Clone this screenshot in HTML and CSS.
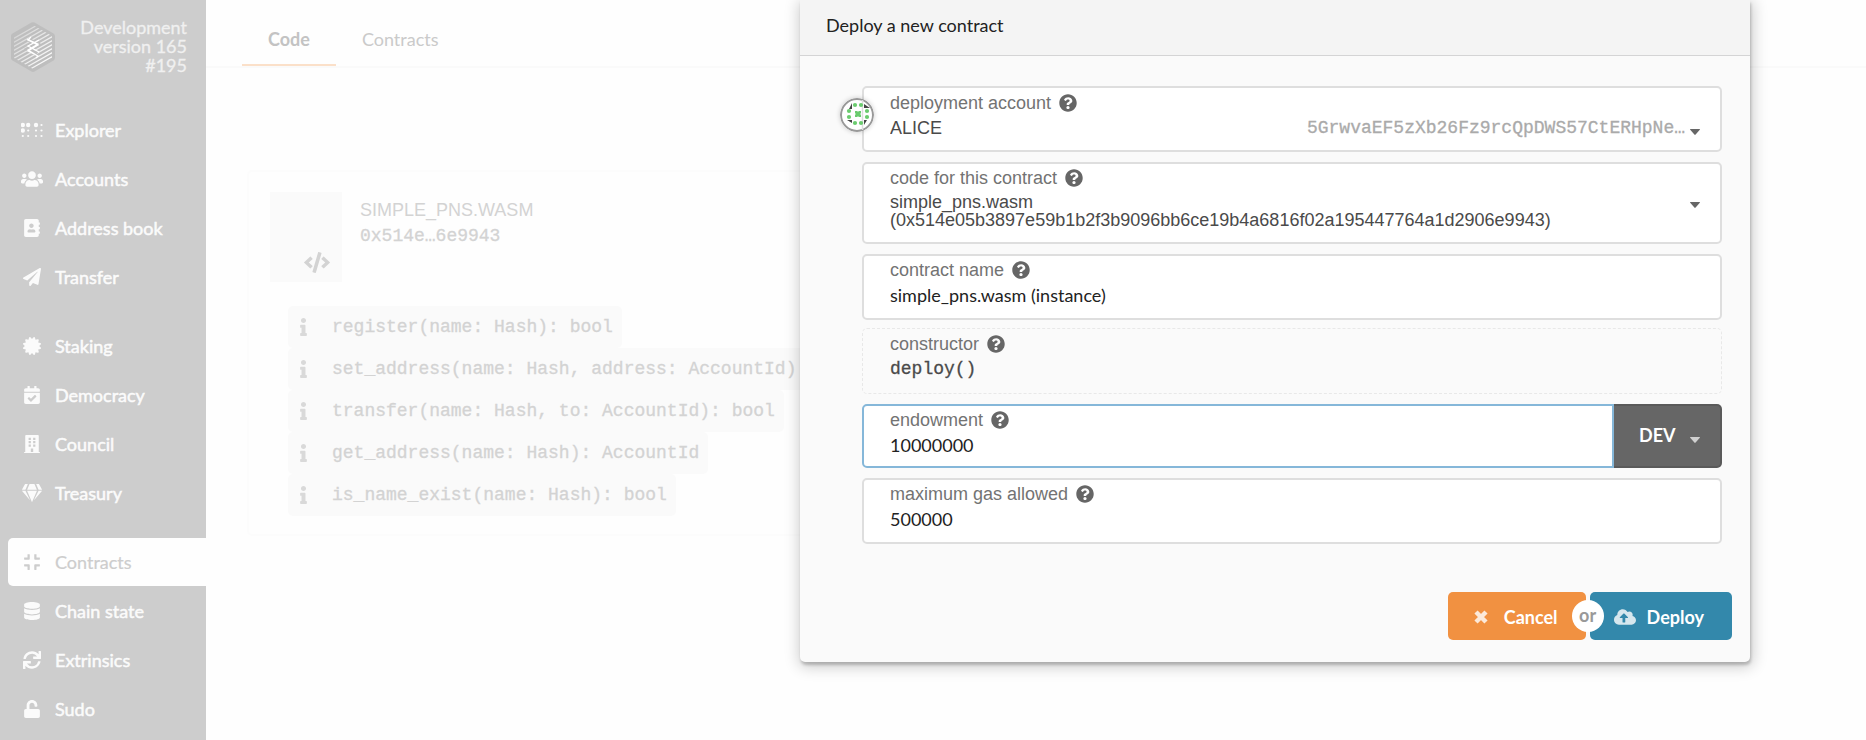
FILE: index.html
```html
<!DOCTYPE html>
<html lang="en">
<head>
<meta charset="utf-8">
<title>Deploy a new contract</title>
<link rel="stylesheet" href="styles.css">
</head>
<body>
<svg class="defs" aria-hidden="true">
  <symbol id="help" viewBox="0 0 512 512"><path d="M504 256c0 136.997-111.043 248-248 248S8 392.997 8 256C8 119.083 119.043 8 256 8s248 111.083 248 248zM262.655 90c-54.497 0-89.255 22.957-116.549 63.758-3.536 5.286-2.353 12.415 2.715 16.258l34.699 26.31c5.205 3.947 12.621 3.008 16.665-2.122 17.864-22.658 30.113-35.797 57.303-35.797 20.429 0 45.698 13.148 45.698 32.958 0 14.976-12.363 22.667-32.534 33.976C247.128 238.528 216 254.941 216 296v4c0 6.627 5.373 12 12 12h56c6.627 0 12-5.373 12-12v-1.333c0-28.462 83.186-29.647 83.186-106.667 0-58.002-60.165-102-116.531-102zM256 338c-25.365 0-46 20.635-46 46 0 25.364 20.635 46 46 46s46-20.636 46-46c0-25.365-20.635-46-46-46z"/></symbol>
  <symbol id="caret" viewBox="0 0 10 6"><path d="M.5 0h9q.8.2.3.8L5.600 5.600q-.6.6-1.200 0L.2.8Q-.3.2.5 0z"/></symbol>
  <symbol id="info" viewBox="0 0 192 512"><path d="M20 424.229h20V279.771H20c-11.046 0-20-8.954-20-20V212c0-11.046 8.954-20 20-20h112c11.046 0 20 8.954 20 20v212.229h20c11.046 0 20 8.954 20 20V492c0 11.046-8.954 20-20 20H20c-11.046 0-20-8.954-20-20v-47.771c0-11.046 8.954-20 20-20zM96 0C56.235 0 24 32.235 24 72s32.235 72 72 72 72-32.235 72-72S135.764 0 96 0z"/></symbol>
</svg>

<aside class="sidebar">
  <header class="chain">
    <svg class="chain-logo" viewBox="0 0 44 50" aria-hidden="true">
      <defs>
        <linearGradient id="fade" x1="0" y1="0" x2="0.6" y2="1">
          <stop offset="0.1" stop-color="#fff" stop-opacity="0.15"/>
          <stop offset="0.8" stop-color="#fff" stop-opacity="0.9"/>
        </linearGradient>
        <clipPath id="hex"><path d="M22 3l19 11v22L22 47 3 36V14z"/></clipPath>
      </defs>
      <path d="M20.500.6q1.500-.8 3 0l19 11q1.500 1 1.500 2.500v22q0 1.500-1.500 2.400l-19 11q-1.500.8-3 0l-19-11Q0 37.600 0 36V14q0-1.500 1.500-2.400z" fill="#bebebe"/>
      <path clip-path="url(#hex)" fill="none" stroke="url(#fade)" stroke-width="1.200" d="M0 10L44-15M0 14L44-11M0 18L44-7M0 22L44-3M0 26L44 1M0 30L44 5M0 34L44 9M0 38L44 13M0 42L44 17M0 46L44 21M0 50L44 25M0 54L44 29M0 58L44 33M0 62L44 37M0 66L44 41M0 70L44 45"/>
      <path d="M18 18l8 4-9 5 9 5" fill="none" stroke="#bebebe" stroke-width="4"/>
      <path d="M20 15l-3 3 10 5-10 6 10 5M16 17l11 5-10 6 10 6-2 2M28 18l-11 6 11 6" fill="none" stroke="#fff" stroke-width="1.200"/>
    </svg>
    <div class="chain-info">
      <div>Development</div>
      <div>version 165</div>
      <div>#195</div>
    </div>
  </header>
  <nav class="nav">
    <ul class="nav-group">
      <li><a class="nav-item" href="#explorer"><svg viewBox="0 0 22 16" aria-hidden="true"><circle cx="1.800" cy="3" r="2.200"/><circle cx="7.200" cy="3" r="2.200"/><circle cx="15" cy="3" r="2.200"/><circle cx="20.500" cy="3" r="1.100"/><circle cx="1.800" cy="8.500" r="2.200"/><circle cx="7.200" cy="8.500" r="1.100"/><circle cx="15" cy="8.500" r="1.100"/><circle cx="20.500" cy="8.500" r="1.100"/><circle cx="1.800" cy="14" r="1.100"/><circle cx="7.200" cy="14" r="1.100"/><circle cx="15" cy="14" r="1.100"/><circle cx="20.500" cy="14" r="1.100"/></svg>Explorer</a></li>
      <li><a class="nav-item" href="#accounts"><svg viewBox="0 0 640 512" aria-hidden="true"><path d="M96 224c35.300 0 64-28.700 64-64s-28.700-64-64-64-64 28.700-64 64 28.700 64 64 64zm448 0c35.300 0 64-28.700 64-64s-28.700-64-64-64-64 28.700-64 64 28.700 64 64 64zm32 32h-64c-17.600 0-33.500 7.100-45.100 18.600 40.300 22.100 68.900 62 75.100 109.400h66c17.700 0 32-14.300 32-32v-32c0-35.300-28.700-64-64-64zm-256 0c61.900 0 112-50.100 112-112S381.900 32 320 32 208 82.100 208 144s50.100 112 112 112zm76.800 32h-8.300c-20.800 10-43.900 16-68.500 16s-47.600-6-68.500-16h-8.300C179.600 288 128 339.600 128 403.200V432c0 26.500 21.500 48 48 48h288c26.500 0 48-21.500 48-48v-28.800c0-63.600-51.600-115.200-115.200-115.200zm-223.700-13.400C161.500 263.100 145.600 256 128 256H64c-35.300 0-64 28.700-64 64v32c0 17.700 14.300 32 32 32h65.900c6.300-47.400 34.900-87.300 75.200-109.400z"/></svg>Accounts</a></li>
      <li><a class="nav-item" href="#addresses"><svg viewBox="0 0 448 512" aria-hidden="true"><path d="M436 160c6.600 0 12-5.400 12-12v-40c0-6.600-5.400-12-12-12h-20V48c0-26.500-21.500-48-48-48H48C21.500 0 0 21.500 0 48v416c0 26.500 21.500 48 48 48h320c26.500 0 48-21.500 48-48v-48h20c6.600 0 12-5.400 12-12v-40c0-6.600-5.400-12-12-12h-20v-64h20c6.600 0 12-5.400 12-12v-40c0-6.600-5.400-12-12-12h-20v-64h20zm-228-32c35.300 0 64 28.700 64 64s-28.700 64-64 64-64-28.700-64-64 28.700-64 64-64zm112 236.800c0 10.600-10 19.200-22.400 19.200H118.400C106 384 96 375.400 96 364.800v-19.200c0-31.800 30.100-57.600 67.200-57.600h5c12.300 5.100 25.700 8 39.800 8s27.600-2.900 39.800-8h5c37.100 0 67.200 25.800 67.200 57.600v19.200z"/></svg>Address book</a></li>
      <li><a class="nav-item" href="#transfer"><svg viewBox="0 0 512 512" aria-hidden="true"><path d="M476 3.200L12.500 270.600c-18.100 10.400-15.800 35.600 2.200 43.200L121 358.400l287.300-253.200c5.500-4.900 13.300 2.600 8.600 8.300L176 407v80.500c0 23.600 28.500 32.900 42.500 15.800L282 426l124.600 52.200c14.200 6 30.400-2.900 33-18.200l72-432C515 7.800 493.300-6.800 476 3.200z"/></svg>Transfer</a></li>
    </ul>
    <ul class="nav-group">
      <li><a class="nav-item" href="#staking"><svg viewBox="0 0 512 512" aria-hidden="true"><path d="M458.622 255.920l45.985-45.005c13.708-12.977 7.316-36.039-10.664-40.339l-62.650-15.990 17.661-62.015c4.991-17.838-11.829-34.663-29.661-29.671l-61.994 17.667-15.984-62.671C337.085.197 313.765-6.276 300.990 7.228L256 53.570 211.011 7.229c-12.630-13.351-36.047-7.234-40.325 10.668l-15.984 62.671-61.995-17.667C74.870 57.907 58.056 74.738 63.046 92.572l17.661 62.015-62.650 15.990C.069 174.878-6.310 197.944 7.392 210.915l45.985 45.005-45.985 45.004c-13.708 12.977-7.316 36.039 10.664 40.339l62.650 15.990-17.661 62.015c-4.991 17.838 11.829 34.663 29.661 29.671l61.994-17.667 15.984 62.671c4.439 18.575 27.696 24.018 40.325 10.668L256 458.610l44.989 46.001c12.500 13.488 35.987 7.486 40.325-10.668l15.984-62.671 61.994 17.667c17.836 4.994 34.651-11.837 29.661-29.671l-17.661-62.015 62.650-15.990c17.987-4.302 24.366-27.367 10.664-40.339l-45.984-45.004z"/></svg>Staking</a></li>
      <li><a class="nav-item" href="#democracy"><svg viewBox="0 0 448 512" aria-hidden="true"><path d="M436 160H12c-6.627 0-12-5.373-12-12v-36c0-26.510 21.490-48 48-48h48V12c0-6.627 5.373-12 12-12h40c6.627 0 12 5.373 12 12v52h128V12c0-6.627 5.373-12 12-12h40c6.627 0 12 5.373 12 12v52h48c26.510 0 48 21.490 48 48v36c0 6.627-5.373 12-12 12zM12 192h424c6.627 0 12 5.373 12 12v260c0 26.510-21.490 48-48 48H48c-26.510 0-48-21.490-48-48V204c0-6.627 5.373-12 12-12zm333.296 95.947l-28.169-28.398c-4.667-4.705-12.265-4.736-16.970-.068L194.120 364.665l-45.980-46.352c-4.667-4.705-12.266-4.736-16.971-.068l-28.397 28.170c-4.705 4.667-4.736 12.265-.068 16.970l82.601 83.269c4.667 4.705 12.265 4.736 16.970.068l142.953-141.805c4.705-4.667 4.736-12.265.068-16.970z"/></svg>Democracy</a></li>
      <li><a class="nav-item" href="#council"><svg viewBox="0 0 448 512" aria-hidden="true"><path fill-rule="evenodd" d="M436 480h-20V24c0-13.300-10.700-24-24-24H56C42.700 0 32 10.700 32 24v456H12c-6.600 0-12 5.400-12 12v20h448v-20c0-6.600-5.400-12-12-12zM128 76h64v64h-64zM256 76h64v64h-64zM128 172h64v64h-64zM256 172h64v64h-64zM128 268h64v64h-64zM256 268h64v64h-64zM190 384h68v96h-68z"/></svg>Council</a></li>
      <li><a class="nav-item" href="#treasury"><svg viewBox="0 0 576 512" aria-hidden="true"><path d="M485.500 0L576 160H474.900L405.700 0h79.800zm-128 0l69.200 160H149.300L218.500 0h139zm-267 0h79.800l-69.200 160H0L90.500 0zM0 192h100.700l123 251.700c1.500 3.100-2.700 5.900-5 3.300L0 192zm148.200 0h279.600l-137 318.200c-1 2.400-4.500 2.400-5.500 0L148.200 192zm204.100 251.700l123-251.700H576L357.300 446.900c-2.300 2.700-6.500-.1-5-3.200z"/></svg>Treasury</a></li>
    </ul>
    <ul class="nav-group">
      <li><a class="nav-item active" href="#contracts" aria-current="page"><svg viewBox="0 0 448 512" aria-hidden="true"><path d="M436 192H312c-13.300 0-24-10.700-24-24V44c0-6.600 5.400-12 12-12h40c6.600 0 12 5.400 12 12v84h84c6.600 0 12 5.400 12 12v40c0 6.600-5.400 12-12 12zm-276-24V44c0-6.600-5.400-12-12-12h-40c-6.600 0-12 5.400-12 12v84H12c-6.600 0-12 5.400-12 12v40c0 6.600 5.400 12 12 12h124c13.300 0 24-10.700 24-24zm0 300V344c0-13.300-10.700-24-24-24H12c-6.600 0-12 5.400-12 12v40c0 6.600 5.400 12 12 12h84v84c0 6.600 5.400 12 12 12h40c6.600 0 12-5.400 12-12zm192 0v-84h84c6.600 0 12-5.400 12-12v-40c0-6.600-5.400-12-12-12H312c-13.300 0-24 10.700-24 24v124c0 6.600 5.400 12 12 12h40c6.600 0 12-5.400 12-12z"/></svg>Contracts</a></li>
      <li><a class="nav-item" href="#chainstate"><svg viewBox="0 0 448 512" aria-hidden="true"><path d="M448 73.143v45.714C448 159.143 347.667 192 224 192S0 159.143 0 118.857V73.143C0 32.857 100.333 0 224 0s224 32.857 224 73.143zM448 176v102.857C448 319.143 347.667 352 224 352S0 319.143 0 278.857V176c48.125 33.143 136.208 48.572 224 48.572S399.874 209.143 448 176zm0 160v102.857C448 479.143 347.667 512 224 512S0 479.143 0 438.857V336c48.125 33.143 136.208 48.572 224 48.572S399.874 369.143 448 336z"/></svg>Chain state</a></li>
      <li><a class="nav-item" href="#extrinsics"><svg viewBox="0 0 512 512" aria-hidden="true"><path d="M440.650 12.570l4 82.770A247.160 247.160 0 0 0 255.830 8C134.730 8 33.910 94.920 12.290 209.820A12 12 0 0 0 24.090 224h49.050a12 12 0 0 0 11.670-9.260 175.910 175.910 0 0 1 317-56.940l-101.460-4.860a12 12 0 0 0-12.570 12v47.410a12 12 0 0 0 12 12H500a12 12 0 0 0 12-12V12a12 12 0 0 0-12-12h-47.370a12 12 0 0 0-11.980 12.570zM255.830 432a175.610 175.610 0 0 1-146-77.800l101.800 4.870a12 12 0 0 0 12.570-12v-47.400a12 12 0 0 0-12-12H12a12 12 0 0 0-12 12V500a12 12 0 0 0 12 12h47.350a12 12 0 0 0 12-12.600l-4.150-82.570A247.170 247.170 0 0 0 255.830 504c121.110 0 221.930-86.920 243.550-201.820a12 12 0 0 0-11.800-14.180h-49.050a12 12 0 0 0-11.670 9.260A175.860 175.860 0 0 1 255.830 432z"/></svg>Extrinsics</a></li>
      <li><a class="nav-item" href="#sudo"><svg viewBox="0 0 448 512" aria-hidden="true"><path d="M400 256H152V152.900c0-39.600 31.700-72.500 71.300-72.900 40-.4 72.700 32.100 72.700 72v16c0 13.300 10.700 24 24 24h32c13.300 0 24-10.700 24-24v-16C376 68 307.500-.3 223.500 0 139.500.3 72 69.500 72 153.500V256H48c-26.500 0-48 21.500-48 48v160c0 26.500 21.500 48 48 48h352c26.500 0 48-21.500 48-48V304c0-26.500-21.500-48-48-48z"/></svg>Sudo</a></li>
    </ul>
  </nav>
</aside>

<main class="page">
  <nav class="tabs">
    <a class="tab current" href="#code">Code</a>
    <a class="tab" href="#instances">Contracts</a>
  </nav>
  <article class="card">
    <div class="card-head">
      <div class="thumb">
        <svg viewBox="0 0 640 512" aria-hidden="true"><path d="M278.900 511.500l-61-17.700c-6.400-1.800-10-8.500-8.200-14.900L346.200 8.700c1.800-6.400 8.500-10 14.900-8.200l61 17.700c6.400 1.800 10 8.500 8.200 14.900L293.800 503.300c-1.900 6.400-8.500 10.100-14.900 8.200zm-114-112.200l43.500-46.400c4.600-4.900 4.300-12.700-.8-17.200L117 256l90.600-79.700c5.100-4.500 5.500-12.300.8-17.200l-43.500-46.400c-4.500-4.800-12.100-5.100-17-.5L3.800 247.200c-5.100 4.700-5.100 12.800 0 17.500l144.100 135.100c4.900 4.600 12.500 4.400 17-.5zm327.200.6l144.100-135.100c5.100-4.700 5.100-12.800 0-17.500L492.100 112.100c-4.800-4.500-12.400-4.300-17 .5L431.600 159c-4.600 4.900-4.300 12.700.8 17.200L523 256l-90.600 79.700c-5.100 4.500-5.500 12.300-.8 17.200l43.500 46.400c4.500 4.900 12.100 5.100 17 .6z"/></svg>
      </div>
      <div class="card-title">
        <div class="card-name">SIMPLE_PNS.WASM</div>
        <div class="mono">0x514e…6e9943</div>
      </div>
      <button class="card-action" type="button" aria-label="Remove"></button>
    </div>
    <ul class="messages">
      <li class="mono"><svg><use href="#info"/></svg>register(name: Hash): bool</li>
      <li class="mono"><svg><use href="#info"/></svg>set_address(name: Hash, address: AccountId)</li>
      <li class="mono"><svg><use href="#info"/></svg>transfer(name: Hash, to: AccountId): bool</li>
      <li class="mono"><svg><use href="#info"/></svg>get_address(name: Hash): AccountId</li>
      <li class="mono"><svg><use href="#info"/></svg>is_name_exist(name: Hash): bool</li>
    </ul>
  </article>
</main>

<div class="dimmer">
  <section class="modal" role="dialog" aria-labelledby="modal-title">
    <h1 class="modal-header" id="modal-title">Deploy a new contract</h1>
    <form class="modal-body">
      <div class="fields">
        <div class="field account">
          <svg class="identicon" viewBox="0 0 34 34" aria-hidden="true">
            <circle cx="17" cy="17" r="16" fill="#fff" stroke="#999" stroke-width="2"/>
            <path d="M22.500 2v30" stroke="#ddd" stroke-width="1.500"/>
            <path d="M12 5v6H9zM24 6l6 4h-6zM7 22h5v3zM24 22h3l-3 5z" fill="#444"/>
            <g fill="#6acb6e"><circle cx="15" cy="7" r="2.100"/><circle cx="21" cy="7" r="2.100"/><circle cx="9" cy="13" r="2.100"/><circle cx="27" cy="13" r="2.100"/><circle cx="9" cy="19" r="2.100"/><circle cx="27" cy="19" r="2.100"/><circle cx="15" cy="25" r="2.100"/><circle cx="21" cy="25" r="2.100"/><path d="M15 13h2.500v.8h1V13H21v2.500h-.8v1h.8V19h-2.500v-.8h-1v.8H15v-2.500h.8v-1H15z"/></g>
          </svg>
          <label class="label" for="account">deployment account<svg class="help"><use href="#help"/></svg></label>
          <div class="row">
            <select class="value" id="account"><option>ALICE</option></select>
            <span class="address">5GrwvaEF5zXb26Fz9rcQpDWS57CtERHpNe…</span>
            <svg class="caret"><use href="#caret"/></svg>
          </div>
        </div>
        <div class="field">
          <label class="label" for="code">code for this contract<svg class="help"><use href="#help"/></svg></label>
          <div class="row top">
            <button class="value code-value" id="code" type="button" aria-haspopup="listbox">simple_pns.wasm (0x514e05b3897e59b1b2f3b9096bb6ce19b4a6816f02a195447764a1d2906e9943)</button>
            <svg class="caret"><use href="#caret"/></svg>
          </div>
        </div>
        <div class="field">
          <label class="label" for="name">contract name<svg class="help"><use href="#help"/></svg></label>
          <input class="value lato" id="name" type="text" value="simple_pns.wasm (instance)">
        </div>
        <div class="field disabled">
          <label class="label" for="constructor">constructor<svg class="help"><use href="#help"/></svg></label>
          <input class="value mono" id="constructor" type="text" value="deploy()" readonly>
        </div>
        <div class="combo">
          <div class="field focused">
            <label class="label" for="endowment">endowment<svg class="help"><use href="#help"/></svg></label>
            <input class="value lato" id="endowment" type="text" value="10000000">
          </div>
          <div class="unit">
            <select class="unit-select" aria-label="Unit"><option>DEV</option></select>
            <svg class="caret"><use href="#caret"/></svg>
          </div>
        </div>
        <div class="field">
          <label class="label" for="gas">maximum gas allowed<svg class="help"><use href="#help"/></svg></label>
          <input class="value lato" id="gas" type="text" value="500000">
        </div>
      </div>
      <div class="actions">
        <button class="button cancel" type="button"><svg viewBox="0 0 14 14" aria-hidden="true"><path d="M2 2l10 10M12 2L2 12" stroke="currentColor" stroke-width="4.500"/></svg>Cancel</button>
        <span class="or">or</span>
        <button class="button deploy" type="button"><svg viewBox="0 0 640 512" aria-hidden="true"><path d="M537.600 226.600c4.100-10.700 6.400-22.400 6.400-34.600 0-53-43-96-96-96-19.700 0-38.100 6-53.300 16.200C367 64.200 315.300 32 256 32c-88.400 0-160 71.600-160 160 0 2.700.1 5.400.2 8.100C40.200 219.800 0 273.200 0 336c0 79.500 64.500 144 144 144h368c70.700 0 128-57.300 128-128 0-61.900-44-113.600-102.400-125.400zM393.400 288H328v112c0 8.800-7.200 16-16 16h-48c-8.800 0-16-7.200-16-16V288h-65.400c-14.300 0-21.400-17.200-11.300-27.300l105.400-105.400c6.200-6.200 16.400-6.200 22.600 0l105.400 105.400c10.100 10.100 2.900 27.300-11.300 27.300z"/></svg>Deploy</button>
      </div>
    </form>
  </section>
</div>
</body>
</html>
```

FILE: styles.css
```css
* { box-sizing: border-box; }

body {
  margin: 0;
  min-height: 100vh;
  display: flex;
  position: relative;
  overflow: hidden;
  background: #fefefe;
  font: 18px/22px Lato, "Liberation Sans", sans-serif;
}

ul { list-style: none; margin: 0; padding: 0; }
a { color: inherit; text-decoration: none; }
svg { fill: currentColor; flex: none; }
.defs { display: none; }
.mono { font-family: "Liberation Mono", monospace; -webkit-text-stroke: 0.3px; }

/* Sidebar */
.sidebar {
  width: 206px;
  flex: none;
  background: #cdcdcd;
  color: #fbfbfb;
}
.chain {
  display: flex;
  justify-content: space-between;
  align-items: center;
  height: 106px;
  padding: 0 19px 12px 11px;
}
.chain-logo { width: 44px; height: 50px; }
.chain-info {
  padding-bottom: 2px;
  line-height: 19px;
  text-align: right;
  color: #f0f0f0;
  -webkit-text-stroke: 0.3px;
}
.nav { display: grid; gap: 21px; }
.nav-group { display: grid; gap: 1px; }
.nav-item {
  display: flex;
  align-items: center;
  gap: 12px;
  height: 48px;
  margin-left: 8px;
  padding-left: 13px;
  border-radius: 5px 0 0 5px;
  -webkit-text-stroke: 0.5px;
}
.nav-item svg { width: 22px; height: 18px; stroke: none; }
.nav-item.active {
  background: #fefefe;
  color: #cdcdcd;
  -webkit-text-stroke: 0.2px;
}

/* Page behind the dialog */
.page { flex: 1; min-width: 0; }
.tabs {
  display: flex;
  height: 68px;
  padding-left: 36px;
  border-bottom: 2px solid #fafafa;
  color: #cacaca;
}
.tab {
  padding: 28px 26px 0;
  border-bottom: 2px solid transparent;
}
.tab.current {
  border-color: #fbe0c9;
  color: #c3c3c3;
  font-weight: bold;
}
.card {
  width: 640px;
  margin: 102px 0 0 41px;
  padding: 20px 21px 18px;
  border: 2px solid #fcfcfc;
  border-radius: 5px;
  color: #d3d3d3;
}
.card-head { display: flex; height: 114px; }
.thumb {
  display: flex;
  align-items: flex-end;
  justify-content: flex-end;
  width: 72px;
  height: 90px;
  padding: 0 12px 9px;
  background: #fafafa;
}
.thumb svg { width: 26px; height: 21px; }
.card-title { flex: 1; padding: 5px 18px; line-height: 26px; }
.card-name { font-family: "Liberation Sans", sans-serif; }
.card-action {
  width: 46px;
  height: 46px;
  margin: -8px 10px 0 0;
  border: 0;
  border-radius: 6px;
  background: #f9f9f9;
}
.messages {
  display: grid;
  justify-items: start;
  padding-left: 18px;
}
.messages li {
  display: flex;
  align-items: center;
  gap: 25px;
  height: 42px;
  padding: 0 9px 0 12px;
  border-radius: 5px;
  background: #fafafa;
  white-space: nowrap;
}
.messages svg { width: 7px; height: 18px; color: #d9d9d9; }

/* Dialog */
.dimmer {
  position: absolute;
  inset: 0;
  display: flex;
  justify-content: flex-end;
  align-items: flex-start;
  padding-right: 116px;
}
.modal {
  width: 950px;
  max-width: 100%;
  border-radius: 0 0 5px 5px;
  background: #fafafa;
  box-shadow: 1px 3px 3px rgba(0, 0, 0, 0.2), 1px 3px 15px 2px rgba(0, 0, 0, 0.2);
}
.modal-header {
  margin: 0;
  padding: 14px 26px 19px;
  border-bottom: 1px solid #d4d4d5;
  background: #f4f4f4;
  color: #222;
  font-size: 18px;
  font-weight: normal;
}
.modal-body { padding: 30px 18px 22px; }
.fields { display: grid; gap: 10px; padding: 0 10px 0 44px; }
.field {
  position: relative;
  min-height: 66px;
  padding: 4px 20px 10px 26px;
  border: 2px solid #dedede;
  border-radius: 5px;
  background: #fff;
}
.field.account { padding-top: 5px; }
.field.disabled {
  margin-top: -2px;
  border: 1px dashed #e8e8e8;
  padding: 5px 21px 11px 27px;
  background: transparent;
}
.label {
  display: flex;
  align-items: center;
  gap: 8px;
  height: 20px;
  margin-bottom: 4px;
  font-family: "Liberation Sans", sans-serif;
  line-height: 20px;
  color: #737373;
}
.help { width: 18px; height: 18px; color: #666; }
.row { display: flex; align-items: center; gap: 5px; }
.row.top { align-items: flex-start; }
.value {
  display: block;
  flex: 1;
  width: 100%;
  min-width: 0;
  height: 22px;
  margin: 0;
  padding: 0;
  border: 0;
  outline: 0;
  appearance: none;
  background: transparent;
  color: #4a4a4a;
  font: 18px/22px "Liberation Sans", sans-serif;
  text-align: left;
}
.value.lato { font-family: Lato, sans-serif; color: #222; }
.value.mono { font-family: "Liberation Mono", monospace; }
.code-value { height: auto; padding: 1px 60px 3px 0; line-height: 18px; }
.address {
  font-family: "Liberation Mono", monospace;
  color: #aaa;
  -webkit-text-stroke: 0.3px;
}
.caret { width: 10px; height: 6px; margin-top: 8px; color: #666; }
.row.top .caret { margin-top: 10px; }
.identicon {
  position: absolute;
  left: -24px;
  top: 10px;
  width: 34px;
  height: 34px;
  border-radius: 50%;
  box-shadow: 0 0 5px rgba(0, 0, 0, 0.2);
}
.combo { display: flex; }
.combo .field {
  flex: 1;
  min-height: 64px;
  padding-bottom: 9px;
  border-color: #85b7d9;
  border-radius: 5px 0 0 5px;
}
.unit {
  display: flex;
  align-items: center;
  gap: 8px;
  width: 108px;
  padding: 0 20px 0 25px;
  border: 2px solid #5a5a5a;
  border-left: 0;
  border-radius: 0 5px 5px 0;
  background: #666;
}
.unit .caret { color: #d0d0d0; }
.unit-select {
  flex: 1;
  min-width: 0;
  height: 24px;
  padding: 0 0 2px;
  border: 0;
  appearance: none;
  background: transparent;
  color: #fff;
  font: bold 18px/22px Lato, sans-serif;
}
.actions {
  display: flex;
  justify-content: flex-end;
  align-items: center;
  gap: 4px;
  position: relative;
  padding-top: 48px;
}
.button {
  display: flex;
  align-items: center;
  height: 48px;
  border: 0;
  border-radius: 5px;
  color: #fff;
  font: bold 18px/22px Lato, sans-serif;
}
.button svg { opacity: 0.8; }
.cancel { gap: 16px; padding: 1px 28px 0 26px; background: #f19141; }
.cancel svg { width: 14px; height: 14px; }
.deploy { gap: 11px; padding: 1px 28px 0 24px; background: #3388ab; }
.deploy svg { width: 22px; height: 18px; }
.or {
  width: 32px;
  height: 32px;
  margin: 0 -18px;
  z-index: 1;
  border-radius: 50%;
  background: #fff;
  color: #999;
  font-weight: bold;
  line-height: 31px;
  text-align: center;
}
```
